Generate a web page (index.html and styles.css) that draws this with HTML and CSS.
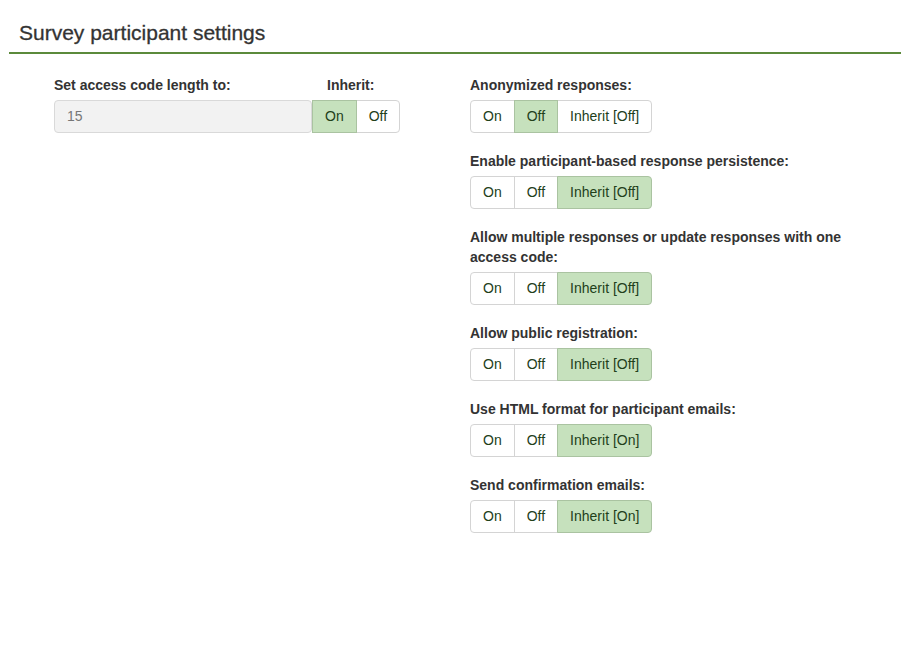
FILE: index.html
```html
<!DOCTYPE html>
<html lang="en">
<head>
<meta charset="utf-8">
<title>Survey participant settings</title>
<link rel="stylesheet" href="styles.css">
</head>
<body>
<div class="page">
  <div class="header"><h3 class="title">Survey participant settings</h3></div>
  <div class="content">
    <div class="col col-left">
      <div class="access">
        <div class="access-field">
          <label class="lbl">Set access code length to:</label>
          <div class="input">15</div>
        </div>
        <div class="access-inherit">
          <label class="lbl lbl-inherit">Inherit:</label>
          <div class="btn-group">
            <span class="btn active">On</span><span class="btn">Off</span>
          </div>
        </div>
      </div>
    </div>
    <div class="col col-right">
      <div class="group">
        <label class="lbl">Anonymized responses:</label>
        <div class="btn-group"><span class="btn">On</span><span class="btn active">Off</span><span class="btn">Inherit [Off]</span></div>
      </div>
      <div class="group">
        <label class="lbl">Enable participant-based response persistence:</label>
        <div class="btn-group"><span class="btn">On</span><span class="btn">Off</span><span class="btn active">Inherit [Off]</span></div>
      </div>
      <div class="group">
        <label class="lbl lbl-wrap">Allow multiple responses or update responses with one access code:</label>
        <div class="btn-group"><span class="btn">On</span><span class="btn">Off</span><span class="btn active">Inherit [Off]</span></div>
      </div>
      <div class="group">
        <label class="lbl">Allow public registration:</label>
        <div class="btn-group"><span class="btn">On</span><span class="btn">Off</span><span class="btn active">Inherit [Off]</span></div>
      </div>
      <div class="group">
        <label class="lbl">Use HTML format for participant emails:</label>
        <div class="btn-group"><span class="btn">On</span><span class="btn">Off</span><span class="btn active">Inherit [On]</span></div>
      </div>
      <div class="group">
        <label class="lbl">Send confirmation emails:</label>
        <div class="btn-group"><span class="btn">On</span><span class="btn">Off</span><span class="btn active">Inherit [On]</span></div>
      </div>
    </div>
  </div>
</div>
</body>
</html>
```
FILE: styles.css
```css
html, body {
  margin: 0;
  padding: 0;
  background: #fff;
}
body {
  font-family: "Liberation Sans", Arial, Helvetica, sans-serif;
  color: #333;
  font-size: 14px;
}
.page {
  padding: 0 10px 0 9px;
}
.header {
  padding: 21px 10px 7px;
  border-bottom: 2px solid #5b8a3b;
}
.title {
  margin: 0;
  font-size: 21px;
  line-height: 24px;
  font-weight: normal;
  color: #333;
  -webkit-text-stroke: 0.3px #333;
}
.content {
  display: grid;
  grid-template-columns: 1fr 1fr;
  padding-top: 21px;
}
.col {
  padding: 0 15px;
}
.col-left {
  padding-left: 45px;
}
.lbl {
  display: block;
  font-weight: bold;
  font-size: 14px;
  line-height: 20px;
  color: #333;
  margin-bottom: 5px;
}
.lbl-wrap {
  max-width: 400px;
}
.access {
  display: flex;
}
.access-field {
  width: 258px;
}
.lbl-inherit {
  padding-left: 15px;
}
.input {
  box-sizing: border-box;
  height: 33px;
  line-height: 31px;
  padding: 0 12px;
  border: 1px solid #d9d9d9;
  border-radius: 4px;
  background: #f2f2f2;
  color: #777;
  font-size: 14px;
}
.group {
  margin-bottom: 18px;
}
.btn-group {
  display: inline-flex;
  vertical-align: top;
}
.btn {
  box-sizing: border-box;
  height: 33px;
  line-height: 31px;
  padding: 0 12px;
  border: 1px solid #d4d4d4;
  background: #fff;
  color: #22401a;
  font-size: 14px;
  margin-left: -1px;
}
.btn:first-child {
  margin-left: 0;
  border-radius: 4px 0 0 4px;
}
.btn:last-child {
  border-radius: 0 4px 4px 0;
}
.btn.active {
  background: #c6e1bd;
  border-color: #aac3a1;
  position: relative;
  z-index: 1;
}
.access-inherit .btn:first-child {
  border-radius: 0;
}
```
